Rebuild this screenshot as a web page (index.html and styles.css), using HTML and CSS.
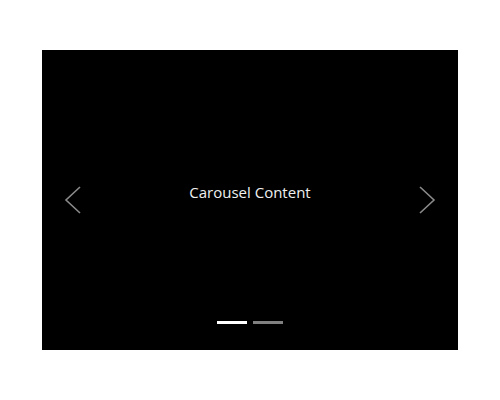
FILE: index.html
```html
<!DOCTYPE html>
<html>
<head>
<meta charset="utf-8">
<link rel="stylesheet" href="styles.css">
</head>
<body>
<div class="page">
  <div class="carousel">
    <div class="slide"><span class="caption">Carousel Content</span></div>
    <button class="nav prev" aria-label="Previous">
      <svg width="20" height="30" viewBox="0 0 20 30"><polyline points="16,2 2,15 16,28" fill="none" stroke="#8a8a8a" stroke-width="1.6"/></svg>
    </button>
    <button class="nav next" aria-label="Next">
      <svg width="20" height="30" viewBox="0 0 20 30"><polyline points="4,2 18,15 4,28" fill="none" stroke="#8a8a8a" stroke-width="1.6"/></svg>
    </button>
    <div class="indicators">
      <span class="dot active"></span>
      <span class="dot"></span>
    </div>
  </div>
</div>
</body>
</html>
```
FILE: styles.css
```css
html, body {
  margin: 0;
  padding: 0;
  background: #fff;
}
.page {
  width: 500px;
  height: 400px;
  padding: 50px 42px;
  box-sizing: border-box;
}
.carousel {
  position: relative;
  width: 416px;
  height: 300px;
  background: #000;
}
.slide {
  height: 100%;
  display: flex;
  align-items: center;
  justify-content: center;
  padding-bottom: 16px;
  box-sizing: border-box;
}
.caption {
  font-family: "Open Sans", "DejaVu Sans", sans-serif;
  font-size: 15px;
  color: #f0f0f0;
}
.nav {
  position: absolute;
  top: 135px;
  width: 20px;
  height: 30px;
  padding: 0;
  border: 0;
  background: none;
  display: flex;
}
.prev { left: 22px; }
.next { right: 22px; }
.indicators {
  position: absolute;
  left: 0;
  right: 0;
  top: 271px;
  display: flex;
  justify-content: center;
  gap: 6px;
}
.dot {
  width: 30px;
  height: 3px;
  background: #808080;
}
.dot.active {
  background: #fff;
}
```
